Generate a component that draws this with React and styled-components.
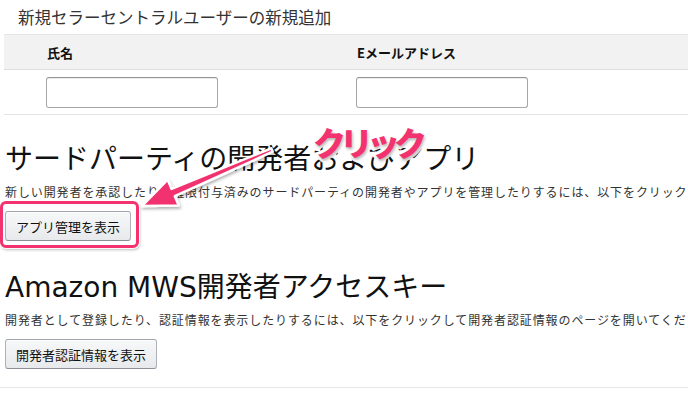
import React from "react";
import styled, { createGlobalStyle } from "styled-components";

const GlobalStyle = createGlobalStyle`
  body {
    margin: 0;
    background: #fff;
    font-family: "Noto Sans CJK JP", "DejaVu Sans", sans-serif;
    color: #111;
  }
`;

const Page = styled.div`
  position: relative;
  width: 688px;
  height: 400px;
  overflow: hidden;
  background: #fff;
`;

const Title = styled.div`
  height: 34px;
  line-height: 34px;
  padding-left: 18px;
  font-size: 16.5px;
  color: #333;
  white-space: nowrap;
`;

const Table = styled.div`
  margin-left: 4px;
  display: grid;
  grid-template-columns: 310px 1fr;
`;

const HeadCell = styled.div`
  height: 34px;
  display: flex;
  align-items: center;
  padding-left: 43px;
  background: #f2f2f2;
  border-top: 1px solid #e4e4e4;
  border-bottom: 1px solid #dedede;
  font-size: 13px;
  font-weight: 700;
  color: #111;
`;

const BodyCell = styled.div`
  height: 44px;
  display: flex;
  align-items: center;
  padding-left: 42px;
  border-bottom: 1px solid #e4e4e4;
`;

const TextInput = styled.input`
  box-sizing: border-box;
  width: 172px;
  height: 31px;
  border: 1px solid #a6a6a6;
  border-top-color: #949494;
  border-radius: 3px;
  background: #fff;
  box-shadow: 0 1px 0 rgba(255, 255, 255, 0.5), inset 0 1px 0 rgba(0, 0, 0, 0.07);
`;

const Section = styled.section`
  padding-left: 5px;
  margin-top: ${(p) => p.gap}px;
`;

const Heading = styled.h2`
  margin: 0;
  font-family: "DejaVu Sans", "Noto Sans CJK JP", sans-serif;
  font-size: 28px;
  line-height: 34px;
  font-weight: 400;
  color: #111;
  white-space: nowrap;
`;

const Desc = styled.p`
  margin: 6px 0 0;
  font-size: 12px;
  letter-spacing: 0.9px;
  line-height: 18px;
  color: #333;
  white-space: nowrap;
`;

const Button = styled.button`
  margin-top: 10px;
  height: 30px;
  padding: 0 10px;
  font-family: inherit;
  font-size: 13px;
  color: #111;
  background: linear-gradient(to bottom, #f7f8fa, #e7e9ec);
  border: 1px solid #adb1b8;
  border-top-color: #a2a6ac;
  border-bottom-color: #8d9096;
  border-radius: 3px;
  box-shadow: inset 0 1px 0 rgba(255, 255, 255, 0.6);
`;

const Rule = styled.div`
  margin-top: 18px;
  border-top: 1px solid #e7e7e7;
`;

const Highlight = styled.div`
  position: absolute;
  left: 0;
  top: 201px;
  width: 133px;
  height: 41px;
  border: 3px solid #f2336f;
  border-radius: 6px;
  box-shadow: 0 0 0 1px rgba(255, 255, 255, 0.9), 1px 2px 3px rgba(0, 0, 0, 0.25);
`;

const Overlay = styled.svg`
  position: absolute;
  left: 0;
  top: 0;
  pointer-events: none;
`;

const ClickLabel = styled.div`
  position: absolute;
  left: 313px;
  top: 118px;
  font-size: 33px;
  font-weight: 900;
  letter-spacing: -6px;
  color: #f2336f;
  -webkit-text-stroke: 6px #fff;
  paint-order: stroke fill;
  text-shadow: 1px 2px 3px rgba(0, 0, 0, 0.3);
  white-space: nowrap;
`;

function Arrow() {
  // shaft from upper right down to the highlighted button
  const tail = [272, 150];
  const tip = [142, 206];
  const dx = tip[0] - tail[0];
  const dy = tip[1] - tail[1];
  const len = Math.hypot(dx, dy);
  const ux = dx / len;
  const uy = dy / len;
  const nx = -uy;
  const ny = ux;
  const headLen = 34;
  const headW = 14;
  const shaftW = 4;
  const tailW = 1.8;
  const bx = tip[0] - ux * headLen;
  const by = tip[1] - uy * headLen;
  const pts = [
    [tail[0] + nx * tailW, tail[1] + ny * tailW],
    [bx + nx * shaftW, by + ny * shaftW],
    [bx + nx * headW, by + ny * headW],
    tip,
    [bx - nx * headW, by - ny * headW],
    [bx - nx * shaftW, by - ny * shaftW],
    [tail[0] - nx * tailW, tail[1] - ny * tailW],
  ]
    .map((p) => p.map((v) => v.toFixed(1)).join(","))
    .join(" ");
  return (
    <Overlay width="688" height="400" viewBox="0 0 688 400">
      <defs>
        <filter id="sh" x="-20%" y="-20%" width="140%" height="140%">
          <feDropShadow dx="1" dy="2" stdDeviation="1.5" floodOpacity="0.3" />
        </filter>
      </defs>
      <polygon
        points={pts}
        fill="#f2336f"
        stroke="#fff"
        strokeWidth="2.5"
        strokeLinejoin="round"
        filter="url(#sh)"
      />
    </Overlay>
  );
}

export default function App() {
  return (
    <Page>
      <GlobalStyle />
      <Title>新規セラーセントラルユーザーの新規追加</Title>
      <Table>
        <HeadCell>氏名</HeadCell>
        <HeadCell>Eメールアドレス</HeadCell>
        <BodyCell>
          <TextInput type="text" />
        </BodyCell>
        <BodyCell>
          <TextInput type="text" />
        </BodyCell>
      </Table>
      <Section gap={28}>
        <Heading>サードパーティの開発者およびアプリ</Heading>
        <Desc>
          新しい開発者を承認したり、権限付与済みのサードパーティの開発者やアプリを管理したりするには、以下をクリックしてください。
        </Desc>
        <Button>アプリ管理を表示</Button>
      </Section>
      <Section gap={30}>
        <Heading>Amazon MWS開発者アクセスキー</Heading>
        <Desc>
          開発者として登録したり、認証情報を表示したりするには、以下をクリックして開発者認証情報のページを開いてください。
        </Desc>
        <Button>開発者認証情報を表示</Button>
      </Section>
      <Rule />
      <Highlight />
      <Arrow />
      <ClickLabel>クリック</ClickLabel>
    </Page>
  );
}
